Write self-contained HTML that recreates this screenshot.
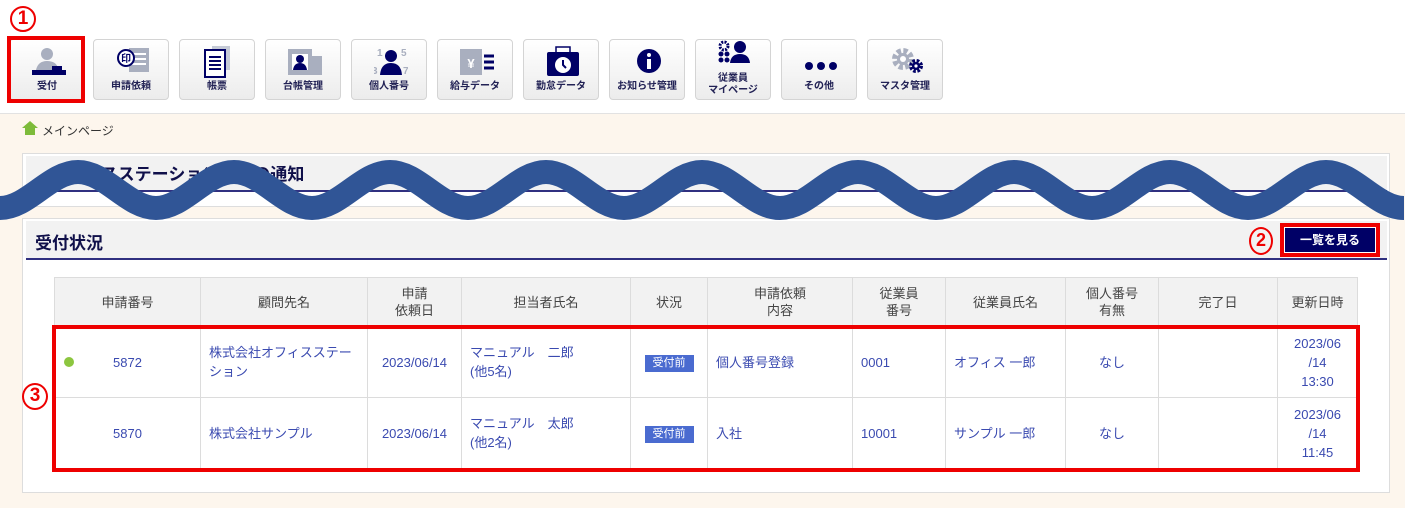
<!DOCTYPE html>
<html><head><meta charset="utf-8"><style>
*{margin:0;padding:0;box-sizing:border-box}
body{width:1405px;height:508px;overflow:hidden;background:#fff;font-family:"Liberation Sans","Noto Sans CJK JP",sans-serif;position:relative}
.a{position:absolute}
.btn{position:absolute;top:39px;width:76px;height:61px;border:1px solid #d4d4d4;border-radius:4px;background:linear-gradient(#fff,#ececec)}
.btn svg{position:absolute;left:22px;top:6px}
.btn span{position:absolute;left:0;right:0;top:41px;text-align:center;font-size:10px;font-weight:bold;color:#222255;white-space:nowrap;line-height:12px}
.cream{position:absolute;left:0;top:113px;width:1405px;height:395px;background:#fdf6ed;border-top:1px solid #e2e2e2}
table{border-collapse:collapse;position:absolute;left:54px;top:277px;width:1304px;font-size:13px}
td,th{border:1px solid #dcdcdc;text-align:center;vertical-align:middle}
th{background:#f2f2f2;color:#444;font-weight:normal;height:49px;line-height:17px}
td{color:#3a4ab0;height:71px;background:#fff;line-height:19px}
.l{text-align:left;padding-left:8px}
.badge{display:inline-block;background:#4a6bd0;color:#fff;font-size:11px;padding:1px 8px;line-height:15px}
.circ{position:absolute;color:#e00;font-weight:bold;border:2px solid #e00;border-radius:50%;text-align:center;font-size:19px;line-height:22px}
</style></head><body>
<div class="circ" style="left:10px;top:6px;width:26px;height:26px">1</div>
<div class="a" style="left:7px;top:36px;width:78px;height:67px;border:4px solid #ee0000;z-index:2"></div>
<div class="btn" style="left:9px">
<svg width="34" height="34" viewBox="0 0 34 34"><circle cx="15" cy="8" r="6" fill="#a9afbf"/><path d="M4 24 Q6 15 15 15 Q24 15 26 22 L26 24Z" fill="#a9afbf"/><rect x="0" y="24" width="34" height="5" fill="#000066"/><rect x="20" y="20" width="10" height="5" fill="#000066"/></svg><span>受付</span></div>
<div class="btn" style="left:93px">
<svg width="34" height="34" viewBox="0 0 34 34"><rect x="13" y="2" width="20" height="24" fill="#a9afbf"/><path d="M16 8h14M16 13h14M16 18h14" stroke="#fff" stroke-width="2"/><circle cx="10" cy="12" r="8" fill="#fff" stroke="#000066" stroke-width="2"/><text x="10" y="16" font-size="10" font-weight="bold" text-anchor="middle" fill="#000066">印</text></svg><span>申請依頼</span></div>
<div class="btn" style="left:179px">
<svg width="34" height="34" viewBox="0 0 34 34"><rect x="10" y="0" width="18" height="24" fill="#c5cad6"/><rect x="3" y="4" width="20" height="27" fill="#fff" stroke="#000066" stroke-width="2"/><path d="M7 11h12M7 15h12M7 19h12M7 23h12" stroke="#000066" stroke-width="2"/></svg><span>帳票</span></div>
<div class="btn" style="left:265px">
<svg width="34" height="34" viewBox="0 0 34 34"><rect x="0" y="3" width="24" height="26" fill="#a9afbf"/><rect x="4" y="8" width="16" height="16" fill="#fff"/><circle cx="12" cy="13" r="4" fill="#000066"/><path d="M5 24Q6 17 12 17Q18 17 19 24Z" fill="#000066"/><rect x="24" y="10" width="10" height="19" fill="#a9afbf"/></svg><span>台帳管理</span></div>
<div class="btn" style="left:351px">
<svg width="34" height="34" viewBox="0 0 34 34"><circle cx="17" cy="10" r="6" fill="#000066"/><path d="M6 29Q7 17 17 17Q27 17 28 29Z" fill="#000066"/><text x="3" y="10" font-size="10" font-weight="bold" fill="#a9afbf">1</text><text x="27" y="10" font-size="10" font-weight="bold" fill="#a9afbf">5</text><text x="-2" y="28" font-size="10" font-weight="bold" fill="#a9afbf">3</text><text x="29" y="28" font-size="10" font-weight="bold" fill="#a9afbf">7</text></svg><span>個人番号</span></div>
<div class="btn" style="left:437px">
<svg width="34" height="34" viewBox="0 0 34 34"><rect x="0" y="3" width="22" height="26" fill="#a9afbf"/><text x="11" y="22" font-size="13" font-weight="bold" text-anchor="middle" fill="#fff">¥</text><path d="M24 10h10M24 16h10M24 22h10" stroke="#000066" stroke-width="3"/></svg><span>給与データ</span></div>
<div class="btn" style="left:523px">
<svg width="34" height="34" viewBox="0 0 34 34"><rect x="10" y="1" width="14" height="6" fill="#fff" stroke="#000066" stroke-width="1.5"/><rect x="1" y="6" width="32" height="24" rx="2" fill="#000066"/><circle cx="17" cy="19" r="8" fill="#fff"/><path d="M17 14v5l3 3" stroke="#000066" stroke-width="2" fill="none"/></svg><span>勤怠データ</span></div>
<div class="btn" style="left:609px">
<svg width="34" height="34" viewBox="0 0 34 34"><circle cx="17" cy="15" r="12" fill="#000066"/><circle cx="17" cy="9" r="2" fill="#fff"/><rect x="15" y="13" width="4" height="10" fill="#fff"/></svg><span>お知らせ管理</span></div>
<div class="btn" style="left:695px">
<svg width="34" height="34" viewBox="0 0 34 34" style="top:0"><circle cx="6" cy="6" r="4" fill="none" stroke="#000066" stroke-width="3" stroke-dasharray="2 1.2"/><g fill="#000066"><circle cx="3" cy="14" r="2.5"/><circle cx="9" cy="14" r="2.5"/><circle cx="3" cy="20" r="2.5"/><circle cx="9" cy="20" r="2.5"/><circle cx="22" cy="7" r="6"/><path d="M12 23Q13 14 22 14Q31 14 32 23Z"/></g></svg><span style="top:33px">従業員<br>マイページ</span></div>
<div class="btn" style="left:781px">
<svg width="34" height="34" viewBox="0 0 34 34"><g fill="#000066"><circle cx="5" cy="20" r="4"/><circle cx="17" cy="20" r="4"/><circle cx="29" cy="20" r="4"/></g></svg><span>その他</span></div>
<div class="btn" style="left:867px">
<svg width="34" height="34" viewBox="0 0 34 34"><circle cx="13" cy="13" r="8" fill="none" stroke="#a9afbf" stroke-width="6" stroke-dasharray="4 2.3"/><circle cx="13" cy="13" r="6" fill="#a9afbf"/><circle cx="13" cy="13" r="3" fill="#fff"/><circle cx="26" cy="20" r="5" fill="none" stroke="#000066" stroke-width="4" stroke-dasharray="2.5 1.5"/><circle cx="26" cy="20" r="4" fill="#000066"/><circle cx="26" cy="20" r="1.6" fill="#fff"/></svg><span>マスタ管理</span></div>

<div class="cream"></div>
<svg class="a" style="left:22px;top:121px" width="16" height="14" viewBox="0 0 16 14"><path d="M8 0L16 7H13V14H3V7H0Z" fill="#7dbb3a"/></svg>
<div class="a" style="left:42px;top:122px;font-size:12px;color:#333">メインページ</div>

<div class="a" style="left:22px;top:153px;width:1368px;height:54px;background:#fff;border:1px solid #ddd"></div>
<div class="a" style="left:26px;top:156px;width:1361px;height:36px;background:#f2f2f2;border-bottom:2px solid #303080"></div>
<div class="a" style="left:50px;top:160px;font-size:17px;font-weight:bold;color:#10104a">オフィスステーションからの通知</div>

<div class="a" style="left:22px;top:218px;width:1368px;height:275px;background:#fff;border:1px solid #ddd"></div>
<div class="a" style="left:26px;top:221px;width:1361px;height:39px;background:#f2f2f2;border-bottom:2px solid #303080"></div>
<div class="a" style="left:35px;top:229px;font-size:17px;font-weight:bold;color:#10104a">受付状況</div>
<div class="circ" style="left:1249px;top:227px;width:24px;height:28px;font-size:18px">2</div>
<div class="a" style="left:1280px;top:223px;width:100px;height:34px;border:4px solid #ee0000;background:#000066;box-shadow:inset 0 0 0 1px #fff;color:#fff;font-size:12px;font-weight:bold;text-align:center;line-height:26px">一覧を見る</div>

<table>
<tr><th style="width:146px">申請番号</th><th style="width:167px">顧問先名</th><th style="width:94px">申請<br>依頼日</th><th style="width:169px">担当者氏名</th><th style="width:77px">状況</th><th style="width:145px">申請依頼<br>内容</th><th style="width:93px">従業員<br>番号</th><th style="width:120px">従業員氏名</th><th style="width:93px">個人番号<br>有無</th><th style="width:119px">完了日</th><th>更新日時</th></tr>
<tr><td style="position:relative"><span style="position:absolute;left:9px;top:30px;width:10px;height:10px;border-radius:50%;background:#8cc63f"></span>5872</td><td class="l">株式会社オフィスステー<br>ション</td><td>2023/06/14</td><td class="l">マニュアル　二郎<br>(他5名)</td><td><span class="badge">受付前</span></td><td class="l">個人番号登録</td><td class="l">0001</td><td class="l">オフィス 一郎</td><td>なし</td><td></td><td>2023/06<br>/14<br>13:30</td></tr>
<tr><td>5870</td><td class="l">株式会社サンプル</td><td>2023/06/14</td><td class="l">マニュアル　太郎<br>(他2名)</td><td><span class="badge">受付前</span></td><td class="l">入社</td><td class="l">10001</td><td class="l">サンプル 一郎</td><td>なし</td><td></td><td>2023/06<br>/14<br>11:45</td></tr>
</table>
<div class="a" style="left:52px;top:325px;width:1308px;height:147px;border:4px solid #ee0000"></div>
<div class="circ" style="left:22px;top:383px;width:26px;height:27px">3</div>

<svg class="a" style="left:0;top:0" width="1405" height="508" viewBox="0 0 1405 508">
<path d="M -78 172 C -50 172 -28 208 0 208 S 50 172 78 172 S 128 208 156 208 S 206 172 234 172 S 284 208 312 208 S 362 172 390 172 S 440 208 468 208 S 518 172 546 172 S 596 208 624 208 S 674 172 702 172 S 752 208 780 208 S 830 172 858 172 S 908 208 936 208 S 986 172 1014 172 S 1064 208 1092 208 S 1142 172 1170 172 S 1220 208 1248 208 S 1298 172 1326 172 S 1376 208 1404 208" fill="none" stroke="#305596" stroke-width="24"/>
</svg>
</body></html>
